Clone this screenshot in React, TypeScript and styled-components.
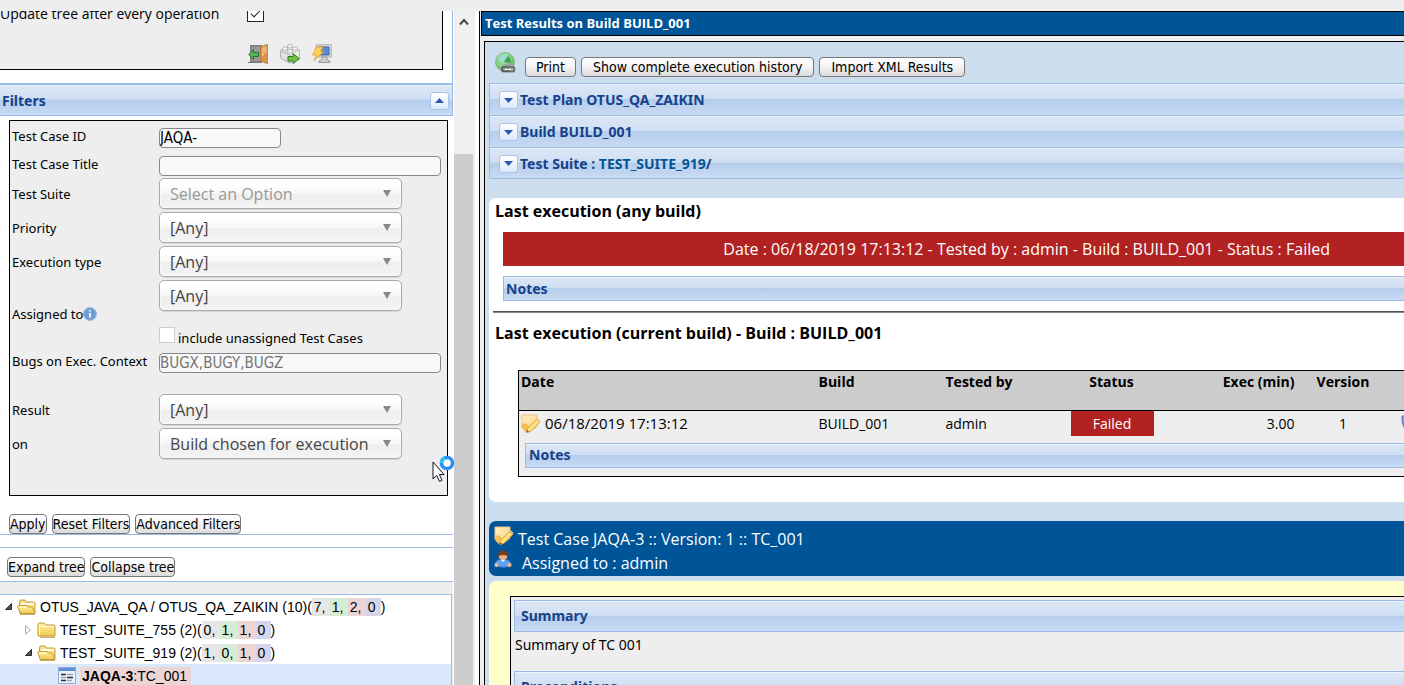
import React from "react";
import styled, { createGlobalStyle, css } from "styled-components";

const BODY_FONT = '"Open Sans", sans-serif';
const LABEL_FONT = '"Noto Sans", sans-serif';
const UI_FONT = '"DejaVu Sans Condensed", "DejaVu Sans", sans-serif';
const BAR_FONT = '"Noto Sans", sans-serif';
const LINE = "#99bbe8";
const TITLE = "#15428b";
const BRAND = "#005498";
const FAILED = "#b22222";

const GlobalStyle = createGlobalStyle`
  *, *::before, *::after { box-sizing: border-box; }
  body {
    margin: 0;
    background: #eee;
    color: #000;
    font: 13px/18px ${LABEL_FONT};
  }
  h1, h2, h3, p, ul { margin: 0; padding: 0; font-size: inherit; }
  svg { display: block; flex: none; }
`;

/* ---------- shared pieces ---------- */

const barFill = css`
  border: 1px solid ${LINE};
  background: linear-gradient(#dde8f6 0%, #cfdef2 48%, #b5cdec 50%, #c9daf3 100%);
  box-shadow: inset 0 1px 0 #edf3fb;
  color: ${TITLE};
  font: bold 14px/18px ${BAR_FONT};
`;

const Bar = styled.h3<{ $height: number; $indent: number; $stacked?: boolean }>`
  ${barFill}
  display: flex;
  align-items: center;
  gap: 2px;
  height: ${(p) => p.$height}px;
  padding-left: ${(p) => p.$indent}px;
  ${(p) => p.$stacked && "border-bottom-width: 0; padding-top: 1px; &:last-of-type { border-bottom-width: 1px; }"}
`;

const ToggleButton = styled.button`
  display: flex;
  align-items: center;
  justify-content: center;
  width: 19px;
  height: 18px;
  padding: 0;
  border: 1px solid #a9c4ec;
  border-radius: 3px;
  background: linear-gradient(#fff, #dbe8fb);
`;

const Button = styled.button<{ $pad?: number }>`
  height: 20px;
  padding: 0 ${(p) => p.$pad ?? 0}px;
  border: 1px solid #777;
  border-radius: 4px;
  background: linear-gradient(#fff, #f4f4f4 50%, #dadada);
  color: #000;
  font: 14px/18px ${UI_FONT};
  white-space: nowrap;
`;

const Caret = ({ up }: { up?: boolean }) => (
  <svg width="9" height="5" viewBox="0 0 9 5" aria-hidden="true">
    <path d={up ? "M0 5 4.500 0 9 5Z" : "M0 0H9L4.500 5Z"} fill="#2f56b0" />
  </svg>
);

/* ---------- page frame ---------- */

const Page = styled.div`
  display: flex;
  flex-direction: column;
  height: 100vh;
  overflow: hidden;
  padding-top: 11px;
`;

const Columns = styled.div`
  display: flex;
  flex: 1;
  min-height: 0;
`;

const Sidebar = styled.aside`
  position: relative;
  display: flex;
  flex: none;
  width: 479px;
  overflow: hidden;
  background: #fff;
`;

const SidebarBody = styled.div`
  width: 453px;
  overflow: hidden;
`;

const ScrollTrack = styled.div`
  display: flex;
  flex-direction: column;
  align-items: stretch;
  width: 21px;
  margin-left: 1px;
  border-right: 2px solid #eee;
  background: #f0f0f0;
`;

const ScrollUp = styled.button`
  display: flex;
  justify-content: center;
  height: 143px;
  padding: 7px 0 0;
  border: 0;
  background: none;
`;

const ScrollThumb = styled.div`
  flex: 1;
  background: #cdcdcd;
`;

/* ---------- settings ---------- */

const Settings = styled.section`
  height: 72px;
  border-right: 1px solid ${LINE};
`;

const SettingsBox = styled.div`
  width: 443px;
  height: 59px;
  overflow: hidden;
  border: solid #000;
  border-width: 0 1px 1px 0;
  background: #eee;
`;

const SettingRow = styled.label`
  display: flex;
  align-items: center;
  height: 18px;
  margin-top: -7px;
  font: 14px/18px ${BODY_FONT};

  span { width: 247px; padding-top: 2px; }
`;

const TickBox = styled.input`
  appearance: none;
  width: 17px;
  height: 17px;
  margin: 0;
  border: 1px solid #222;
  background: #fff;
  display: grid;
  place-items: center;

  &:checked::after {
    content: "";
    width: 9px;
    height: 5px;
    margin-top: -2px;
    border: solid #222;
    border-width: 0 0 1px 1px;
    rotate: -45deg;
  }
`;

const IconRow = styled.div`
  display: flex;
  gap: 12px;
  padding: 22px 0 0 248px;
`;

const IconButton = styled.button`
  padding: 0;
  border: 0;
  background: none;
`;

/* ---------- filters ---------- */

const FilterHead = styled.h2`
  ${barFill}
  display: flex;
  align-items: center;
  justify-content: space-between;
  height: 33px;
  padding: 1px 3px 0 2px;
  border-top-width: 2px;
  border-left: 0;
`;

const FilterBox = styled.form`
  width: 439px;
  height: 376px;
  margin: 4px 0 0 9px;
  padding: 7px 0 0 2px;
  border: 1px solid #000;
  background: #eee;
`;

const FilterRow = styled.div<{ $after: number; $top?: boolean }>`
  display: grid;
  grid-template-columns: 147px 1fr;
  align-items: ${(p) => (p.$top ? "start" : "center")};
  margin-bottom: ${(p) => p.$after}px;
`;

const FilterLabel = styled.label`
  display: flex;
  align-items: center;
  line-height: 16px;
  white-space: nowrap;
`;

const TextInput = styled.input<{ $width: number }>`
  width: ${(p) => p.$width}px;
  height: 20px;
  padding: 0;
  border: 1px solid #888;
  border-radius: 4px;
  background: #f8f8f8;
  font: 15px/18px ${UI_FONT};
  color: #000;

  &::placeholder { color: #757575; opacity: 1; }
`;

const SelectWrap = styled.div`
  position: relative;
  width: 243px;

  &::after {
    content: "";
    position: absolute;
    top: 12px;
    right: 11px;
    border: solid transparent;
    border-width: 7px 4px 0;
    border-top-color: #888;
    pointer-events: none;
  }
`;

const Select = styled.select<{ $empty?: boolean }>`
  appearance: none;
  display: block;
  width: 100%;
  height: 31px;
  padding: 0 24px 0 10px;
  border: 1px solid #aaa;
  border-radius: 5px;
  background: linear-gradient(#fff 20%, #f6f6f6 50%, #eee 52%, #f4f4f4 100%);
  box-shadow: inset 0 0 3px #fff, 0 1px 1px rgba(0, 0, 0, 0.1);
  color: ${(p) => (p.$empty ? "#999" : "#444")};
  font: 16px/24px ${BODY_FONT};
`;

const CheckLabel = styled.label`
  display: flex;
  gap: 3px;
  height: 20px;
  margin-top: 16px;

  span { padding-top: 2px; }
`;

const PlainCheck = styled.input`
  appearance: none;
  width: 16px;
  height: 16px;
  margin: 0;
  border: 1px solid #ccc;
  background: #fff;
`;

const ButtonBar = styled.div`
  display: flex;
  gap: 5px;
  padding: 18px 0 0 9px;
  border: solid ${LINE};
  border-width: 0 0 1px;
`;

const TreeTools = styled(ButtonBar)`
  margin-top: 12px;
  padding: 9px 0 4px 7px;
  border-top-width: 1px;
  background: #fff;
`;

const Gray = styled.div<{ $top?: number }>`
  padding-top: ${(p) => p.$top ?? 0}px;
  background: #eee;
`;

function Dropdown({ id, value, empty }: { id: string; value: string; empty?: boolean }) {
  return (
    <SelectWrap>
      <Select id={id} $empty={empty} defaultValue={value}>
        <option>{value}</option>
      </Select>
    </SelectWrap>
  );
}

/* ---------- tree ---------- */

const Tree = styled.ul`
  width: 452px;
  min-height: 120px;
  border: solid ${LINE};
  border-width: 1px 1px 0 0;
  background: #fff;
  list-style: none;
  font: 14px/18px "Liberation Sans", sans-serif;
`;

const TreeRow = styled.li<{ $depth: number; $selected?: boolean }>`
  display: flex;
  align-items: center;
  height: 23px;
  padding-left: ${(p) => 4 + p.$depth * 20}px;
  background: ${(p) => (p.$selected ? "#d9e8fb" : "none")};
  white-space: nowrap;

  > * + svg { margin: 0 4px 0 3px; }
`;

const NoArrow = styled.span`
  width: 11px;
`;

const Count = styled.span<{ $tone: string; $last?: boolean }>`
  width: ${(p) => (p.$last ? 15 : 18)}px;
  padding-left: 2px;
  background: ${(p) => p.$tone};
`;

const CaseName = styled.span`
  padding: 0 4px 0 2px;
  background: #ecd5d5;
`;

const TONES = ["#e6e6e6", "#d5ecd5", "#ecd5d5", "#d5d5ec"];

const Arrow = ({ open }: { open?: boolean }) => (
  <svg width="10" height="10" viewBox="0 0 10 10" aria-hidden="true">
    {open ? (
      <path d="M7.500 1.500V7.500H1.500Z" fill="#555" stroke="#2a2a2a" />
    ) : (
      <path d="M1.500 .8V9.200L6.500 5Z" fill="#fff" stroke="#aaa" />
    )}
  </svg>
);

const Folder = ({ open }: { open?: boolean }) => (
  <svg width="19" height="16" viewBox="0 0 19 16" aria-hidden="true">
    <defs>
      <linearGradient id="fold" x1="0" y1="0" x2="0" y2="1">
        <stop offset="0" stopColor="#fff0a0" />
        <stop offset="1" stopColor="#f0cc50" />
      </linearGradient>
    </defs>
    {open ? (
      <>
        <path d="M2.500 14V2.500Q2.500 1 4 1H8L9.500 3H16.500Q18 3 18 4.500V14Z" fill="#f7dd84" stroke="#c99a35" />
        <path d="M4 5H17" stroke="#fffbe0" strokeWidth="2" />
        <path d="M.6 7.500Q.6 6.500 1.800 6.500H9.500L11.500 8H14.500Q15.500 8 15.800 9L17.800 14.500H3.500Z" fill="url(#fold)" stroke="#c99a35" />
        <path d="M2 8H9" stroke="#fffbe0" />
      </>
    ) : (
      <>
        <path d="M1 14V2.500Q1 1 2.500 1H7L9 3H16.500Q18 3 18 4.500V14Z" fill="url(#fold)" stroke="#c99a35" />
        <path d="M2 4.500H17M2.500 3V13" stroke="#fffbe0" />
      </>
    )}
    <path d="M3 15.200H18" stroke="#b08a3c" />
  </svg>
);

const CaseIcon = () => (
  <svg width="18" height="17" viewBox="0 0 18 17" aria-hidden="true">
    <path d="M.5 .5H17.500V16.500H.5Z" fill="#eaf1fb" stroke="#8fa9d2" />
    <path d="M1 1H17V4H1Z" fill="#5e8fdb" />
    <path d="M3 7.500H8M9 10.500H15M3 13.500H8" stroke="#2c2c2c" strokeWidth="1.600" />
    <path d="M9 7.500H15M3 10.500H8M9 13.500H14" stroke="#9aa3ad" strokeWidth="1.400" />
  </svg>
);

const SUITES = [
  { name: "OTUS_JAVA_QA / OTUS_QA_ZAIKIN (10)", counts: [7, 1, 2, 0], depth: 0, open: true },
  { name: "TEST_SUITE_755 (2)", counts: [0, 1, 1, 0], depth: 1, open: false },
  { name: "TEST_SUITE_919 (2)", counts: [1, 0, 1, 0], depth: 1, open: true },
];

/* ---------- drawings ---------- */

const DoorIcon = () => (
  <svg width="20" height="20" viewBox="0 0 20 20" aria-hidden="true">
    <path d="M2 1H14V18H2Z" fill="#7d7d7d" />
    <path d="M3.500 2.500H13V17H3.500Z" fill="#999" />
    <path d="M0 18.500H14" stroke="#777" />
    <path d="M12.500 3 19.500 .3V19.700L12.500 17Z" fill="#d8924a" stroke="#b87838" strokeWidth=".8" />
    <path d="M14 4 18.500 2V9L14 9Z" fill="#eab577" />
    <circle cx="14.800" cy="10.500" r="1" fill="#ffe08a" />
    <path d="M.8 10.500 5.500 5.500V8.500H10.500V12.500H5.500V15.500Z" fill="#57b85a" stroke="#1f7a2c" />
  </svg>
);

const BrickIcon = () => (
  <svg width="20" height="20" viewBox="0 0 20 20" aria-hidden="true">
    <path d="M.6 6 10 3 19.400 6V14L10 19 .6 14Z" fill="#f2f2f2" stroke="#b4b4b4" />
    <path d="M.6 7 10 11V19L.6 14Z" fill="#e2e2e2" stroke="#b4b4b4" />
    <g fill="#fbfbfb" stroke="#b0b0b0" strokeWidth=".8">
      <path d="M7.500 2V4.500Q10 6 12.500 4.500V2" />
      <ellipse cx="10" cy="2" rx="2.500" ry="1.500" />
      <path d="M2.500 4.500V7Q5 8.500 7.500 7V4.500" />
      <ellipse cx="5" cy="4.500" rx="2.500" ry="1.500" />
      <path d="M12.500 4.500V7Q15 8.500 17.500 7V4.500" />
      <ellipse cx="15" cy="4.500" rx="2.500" ry="1.500" />
      <path d="M7.500 7V9.500Q10 11 12.500 9.500V7" />
      <ellipse cx="10" cy="7" rx="2.500" ry="1.500" />
    </g>
    <path d="M8 12.500H13V9.500L19.500 14.700 13 19.500V17H8Z" fill="#6fc044" stroke="#2f7d1e" />
  </svg>
);

const RefreshIcon = () => (
  <svg width="20" height="20" viewBox="0 0 20 20" aria-hidden="true">
    <path d="M4 .8H19.300V13H4Z" fill="#dcdcdc" stroke="#b0b0b0" />
    <path d="M6 3H17V11H6Z" fill="#5b8cd6" stroke="#3d67ad" />
    <path d="M10 13H15V15.500L18 17V18.500H7V17L10 15.500Z" fill="#cfcfcf" stroke="#999" />
    <path d="M4.500 3H11L8.500 7.500H12L2 16.500 4.500 11H.6Z" fill="#ffd257" stroke="#d99a1c" strokeWidth=".8" />
  </svg>
);

const GlobeIcon = () => (
  <svg width="21" height="21" viewBox="0 0 21 21" aria-hidden="true">
    <defs>
      <radialGradient id="globe" cx=".4" cy=".35" r=".65">
        <stop offset="0" stopColor="#b9ecb0" />
        <stop offset="1" stopColor="#5cb860" />
      </radialGradient>
    </defs>
    <circle cx="10" cy="10" r="9.500" fill="url(#globe)" stroke="#8cbf8e" />
    <path d="M6 3 12 1.500 14 4 10 9 7 11 4 8Z" fill="#9bd8e0" opacity=".8" />
    <path d="M13 4 9 10 16 11Q16 7 13 4Z" fill="#3ea247" />
    <path d="M5.500 17Q6 12 11 11.500 14 9.500 17 12L20 14.500V20.500H6.500Z" fill="#9aa3a6" opacity=".8" />
    <g fill="none" strokeWidth="1.600">
      <rect x="7" y="15" width="7" height="4.500" rx="2.200" stroke="#4c5254" />
      <rect x="12.500" y="15" width="7" height="4.500" rx="2.200" stroke="#666" />
      <path d="M10 17.300H16" stroke="#eee" strokeWidth="1.400" />
    </g>
  </svg>
);

const NoteIcon = () => (
  <svg width="20" height="20" viewBox="0 0 20 20" aria-hidden="true">
    <defs>
      <linearGradient id="note" x1="0" y1="0" x2="1" y2="1">
        <stop offset="0" stopColor="#fff0c4" />
        <stop offset="1" stopColor="#fbcf7a" />
      </linearGradient>
    </defs>
    <path d="M1 1H16V12L10 17H4L1 13Z" fill="url(#note)" stroke="#eec08a" />
    <path d="M1 11 5 9.500 8 13 15.500 7V11L8 18 4 17 1 13Z" fill="#f9c04c" stroke="#e9ae6c" strokeWidth=".7" />
    <path d="M5.500 18.500 6.500 14.500 15.500 5.500 18.800 8.500 9.500 17.500Z" fill="#ffe27a" stroke="#c9952f" strokeWidth=".8" />
    <path d="M15.500 5.500 17 4.500 19.500 7 18.800 8.500Z" fill="#f3c393" />
    <path d="M5.500 18.500 6.200 16.200 8 17.700Z" fill="#555" />
  </svg>
);

const UserIcon = () => (
  <svg width="18" height="18" viewBox="0 0 18 18" aria-hidden="true">
    <path d="M.5 16Q1 10 6 9.500H12Q17 10 17.500 16Q9 18.500 .5 16Z" fill="#5fa3f0" stroke="#2e6fc4" strokeWidth=".7" />
    <circle cx="2.500" cy="15" r="2" fill="#f2b78a" />
    <circle cx="15.500" cy="15" r="2" fill="#f2b78a" />
    <circle cx="9" cy="6" r="4.300" fill="#eab088" />
    <path d="M4 7Q3.500 .4 9 .4T14 7Q12.500 4.800 9 5T4 7Z" fill="#7b3f1c" />
    <path d="M7 10 9 12 11 10Z" fill="#fff" />
  </svg>
);

const InfoIcon = () => (
  <svg width="14" height="14" viewBox="0 0 14 14" role="img" aria-label="Info">
    <circle cx="7" cy="7" r="6.500" fill="#6f9fd2" stroke="#9bbce0" />
    <path d="M7 3V4.500M7 6V10.500" stroke="#e8f1fa" strokeWidth="2" />
  </svg>
);

const ShieldIcon = () => (
  <svg width="18" height="20" viewBox="0 0 18 20" aria-hidden="true">
    <path d="M1 2Q6 3 9 .5Q12 3 17 2Q18 14 9 19.500Q0 14 1 2Z" fill="#7b9fe8" stroke="#5577c8" />
  </svg>
);

const Pointer = styled.svg`
  position: absolute;
  left: 432px;
  top: 443px;
`;

/* ---------- results ---------- */

const Main = styled.main`
  flex: 1;
  min-width: 0;
  overflow: hidden;
  padding-left: 1px;
  border-left: 1px solid #000;
`;

const Sheet = styled.div`
  width: 119%;
`;

const PageTitle = styled.h1`
  height: 25px;
  padding-left: 3px;
  border: 1px solid #000;
  background: ${BRAND};
  color: #fff;
  font: bold 13px/23px ${BODY_FONT};
`;

const Workspace = styled.div`
  min-height: 700px;
  margin: 5px 0 0 3px;
  padding: 0 14px 0 4px;
  border: 1px solid #000;
  background: #cde;
`;

const Toolbar = styled.div`
  display: flex;
  align-items: flex-end;
  gap: 5px;
  height: 41px;
  padding: 0 0 6px 6px;

  > svg { margin: 0 4px 4px 0; }
`;

const TitleLink = styled.a`
  color: ${BRAND};
  text-decoration: none;
`;

const BarText = styled.span`
  white-space: pre;
`;

const Card = styled.section`
  height: 304px;
  margin-top: 19px;
  padding: 3px 0 0 4px;
  border-radius: 7px;
  background: #fff;
`;

const CardTitle = styled.h2`
  padding-left: 2px;
  font: bold 16px/20px ${BODY_FONT};
`;

const CardInset = styled.div`
  margin: 11px 14px 10px 10px;
`;

const ResultBanner = styled.p`
  height: 34px;
  margin-bottom: 10px;
  background: ${FAILED};
  color: #fff;
  font: 16px/34px ${BODY_FONT};
  text-align: center;
`;

const Rule = styled.hr`
  height: 2px;
  margin: 0 0 10px;
  border: 0;
  border-top: 1px solid #555;
  background: #888;
`;

const Runs = styled.table`
  width: calc(100% - 39px);
  margin: 27px 14px 0 25px;
  border: 1px solid #000;
  border-collapse: collapse;
  table-layout: fixed;
  background: #eee;
  font: 14px/20px ${BODY_FONT};

  th, td { padding: 0 3px 0 2px; vertical-align: top; white-space: nowrap; }
  th {
    height: 40px;
    padding-top: 1px;
    border-bottom: 1px solid #000;
    background: #ccc;
  }
  td { height: 32px; padding-top: 3px; }
`;

const Cell = styled.td<{ $align?: string }>`
  && { text-align: ${(p) => p.$align ?? "left"}; }
`;

const IconCell = styled.td`
  && { padding-left: 11px; }
`;

const Head = styled.th<{ $align?: string }>`
  && { text-align: ${(p) => p.$align ?? "left"}; }
`;

const StatusTag = styled.div`
  height: 25px;
  margin: -3px -3px 0 -2px;
  background: ${FAILED};
  color: #fff;
  line-height: 25px;
`;

const DateCell = styled.div`
  display: flex;
  gap: 4px;
  font-size: 15px;
  line-height: 18px;
`;

const RunNotes = styled.td`
  && { height: 34px; padding: 0 3px 8px 6px; }
`;

const CaseHead = styled.header`
  height: 55px;
  margin: 19px 0 5px;
  padding: 5px 0 0 5px;
  border-radius: 7px;
  background: ${BRAND};
  color: #fff;
  font: 16px/18px ${BODY_FONT};
`;

const CaseLine = styled.div<{ $gap: number }>`
  display: flex;
  gap: ${(p) => p.$gap}px;
  height: 24px;

  > span { padding-top: 4px; }
`;

const CaseBody = styled.section`
  min-height: 300px;
  padding: 15px 21px;
  border-radius: 7px;
  background: #ffc;
`;

const CaseBox = styled.div`
  min-height: 260px;
  padding: 3px;
  border: 1px solid #000;
  background: #eee;
`;

const CaseText = styled.p`
  height: 39px;
  padding: 3px 0 0 1px;
  font-size: 14px;
  line-height: 20px;
`;

const PANELS = [
  { text: "Test Plan OTUS_QA_ZAIKIN" },
  { text: "Build BUILD_001" },
  { text: "Test Suite : ", link: "TEST_SUITE_919", tail: "/" },
];

export default function App() {
  return (
    <Page>
      <GlobalStyle />
      <Columns>
        <Sidebar>
          <SidebarBody>
            <Settings>
              <SettingsBox>
                <SettingRow>
                  <span>Update tree after every operation</span>
                  <TickBox type="checkbox" defaultChecked />
                </SettingRow>
                <IconRow>
                  <IconButton aria-label="Exit"><DoorIcon /></IconButton>
                  <IconButton aria-label="Export test plan"><BrickIcon /></IconButton>
                  <IconButton aria-label="Refresh"><RefreshIcon /></IconButton>
                </IconRow>
              </SettingsBox>
            </Settings>

            <FilterHead>
              Filters
              <ToggleButton aria-label="Collapse filters"><Caret up /></ToggleButton>
            </FilterHead>

            <FilterBox>
              <FilterRow $after={8} $top>
                <FilterLabel htmlFor="tcid">Test Case ID</FilterLabel>
                <TextInput id="tcid" $width={122} defaultValue="JAQA-" />
              </FilterRow>
              <FilterRow $after={2} $top>
                <FilterLabel htmlFor="tctitle">Test Case Title</FilterLabel>
                <TextInput id="tctitle" $width={282} />
              </FilterRow>
              <FilterRow $after={3}>
                <FilterLabel htmlFor="suite">Test Suite</FilterLabel>
                <Dropdown id="suite" value="Select an Option" empty />
              </FilterRow>
              <FilterRow $after={3}>
                <FilterLabel htmlFor="priority">Priority</FilterLabel>
                <Dropdown id="priority" value="[Any]" />
              </FilterRow>
              <FilterRow $after={3}>
                <FilterLabel htmlFor="exectype">Execution type</FilterLabel>
                <Dropdown id="exectype" value="[Any]" />
              </FilterRow>
              <FilterRow $after={6}>
                <FilterLabel htmlFor="assigned">Assigned to<InfoIcon /></FilterLabel>
                <div>
                  <Dropdown id="assigned" value="[Any]" />
                  <CheckLabel>
                    <PlainCheck type="checkbox" />
                    <span>include unassigned Test Cases</span>
                  </CheckLabel>
                </div>
              </FilterRow>
              <FilterRow $after={21} $top>
                <FilterLabel htmlFor="bugs">Bugs on Exec. Context</FilterLabel>
                <TextInput id="bugs" $width={282} placeholder="BUGX,BUGY,BUGZ" />
              </FilterRow>
              <FilterRow $after={3}>
                <FilterLabel htmlFor="result">Result</FilterLabel>
                <Dropdown id="result" value="[Any]" />
              </FilterRow>
              <FilterRow $after={3}>
                <FilterLabel htmlFor="on">on</FilterLabel>
                <Dropdown id="on" value="Build chosen for execution" />
              </FilterRow>
            </FilterBox>

            <ButtonBar>
              <Button>Apply</Button>
              <Button>Reset Filters</Button>
              <Button>Advanced Filters</Button>
            </ButtonBar>

            <Gray>
              <TreeTools>
                <Button>Expand tree</Button>
                <Button>Collapse tree</Button>
              </TreeTools>
            </Gray>
            <Gray $top={12}>
              <Tree>
                {SUITES.map((s) => (
                  <TreeRow key={s.name} $depth={s.depth}>
                    <Arrow open={s.open} />
                    <Folder open={s.open} />
                    <span>{s.name}(</span>
                    {s.counts.map((c, i) => (
                      <Count key={i} $tone={TONES[i]} $last={i === 3}>
                        {c}{i < 3 && ","}
                      </Count>
                    ))}
                    <span>)</span>
                  </TreeRow>
                ))}
                <TreeRow $depth={2} $selected>
                  <NoArrow />
                  <CaseIcon />
                  <CaseName><b>JAQA-3</b>:TC_001</CaseName>
                </TreeRow>
              </Tree>
            </Gray>
          </SidebarBody>

          <ScrollTrack>
            <ScrollUp aria-label="Scroll up">
              <svg width="10" height="8" viewBox="0 0 10 8" aria-hidden="true">
                <path d="M1 6.500 5 2 9 6.500" fill="none" stroke="#444" strokeWidth="2" />
              </svg>
            </ScrollUp>
            <ScrollThumb />
          </ScrollTrack>

          <Pointer width="24" height="30" viewBox="0 0 24 30" aria-hidden="true">
            <path d="M1 8V25L4.800 21.400 7.500 27.500 10 26.300 7.400 20.500H12Z" fill="#fff" stroke="#112" />
            <circle cx="15" cy="9" r="5.500" fill="#fff" stroke="#2b8ff0" strokeWidth="3.500" />
            <path d="M9.500 9A5.500 5.500 0 0 1 13 3.900" fill="none" stroke="#2cc4f8" strokeWidth="3.500" />
          </Pointer>
        </Sidebar>

        <Main>
          <Sheet>
            <PageTitle>Test Results on Build BUILD_001</PageTitle>
            <Workspace>
              <Toolbar>
                <GlobeIcon />
                <Button $pad={10}>Print</Button>
                <Button $pad={11}>Show complete execution history</Button>
                <Button $pad={11}>Import XML Results</Button>
              </Toolbar>

              {PANELS.map((p) => (
                <Bar key={p.text} $height={32} $indent={9} $stacked>
                  <ToggleButton aria-label={"Expand " + p.text}><Caret /></ToggleButton>
                  <BarText>
                    {p.text}
                    {p.link && <TitleLink href="#suite">{p.link}</TitleLink>}
                    {p.tail}
                  </BarText>
                </Bar>
              ))}

              <Card>
                <CardTitle>Last execution (any build)</CardTitle>
                <CardInset>
                  <ResultBanner>
                    Date : 06/18/2019 17:13:12 - Tested by : admin - Build : BUILD_001 - Status : Failed
                  </ResultBanner>
                  <Bar $height={25} $indent={2}>Notes</Bar>
                </CardInset>
                <Rule />
                <CardTitle>Last execution (current build) - Build : BUILD_001</CardTitle>
                <Runs>
                  <colgroup>
                    <col width="298" />
                    <col width="127" />
                    <col width="127" />
                    <col width="83" />
                    <col width="144" />
                    <col width="92" />
                    <col />
                  </colgroup>
                  <thead>
                    <tr>
                      <Head>Date</Head>
                      <Head>Build</Head>
                      <Head>Tested by</Head>
                      <Head $align="center">Status</Head>
                      <Head $align="right">Exec (min)</Head>
                      <Head $align="center">Version</Head>
                      <Head />
                    </tr>
                  </thead>
                  <tbody>
                    <tr>
                      <Cell><DateCell><NoteIcon />06/18/2019 17:13:12</DateCell></Cell>
                      <Cell>BUILD_001</Cell>
                      <Cell>admin</Cell>
                      <Cell $align="center"><StatusTag>Failed</StatusTag></Cell>
                      <Cell $align="right">3.00</Cell>
                      <Cell $align="center">1</Cell>
                      <IconCell><ShieldIcon /></IconCell>
                    </tr>
                    <tr>
                      <RunNotes colSpan={7}><Bar $height={25} $indent={3}>Notes</Bar></RunNotes>
                    </tr>
                  </tbody>
                </Runs>
              </Card>

              <CaseHead>
                <CaseLine $gap={4}>
                  <NoteIcon />
                  <span>Test Case JAQA-3 :: Version: 1 :: TC_001</span>
                </CaseLine>
                <CaseLine $gap={10}>
                  <UserIcon />
                  <span>Assigned to : admin</span>
                </CaseLine>
              </CaseHead>

              <CaseBody>
                <CaseBox>
                  <Bar $height={32} $indent={6}>Summary</Bar>
                  <CaseText>Summary of TC 001</CaseText>
                  <Bar $height={32} $indent={6}>Preconditions</Bar>
                </CaseBox>
              </CaseBody>
            </Workspace>
          </Sheet>
        </Main>
      </Columns>
    </Page>
  );
}
